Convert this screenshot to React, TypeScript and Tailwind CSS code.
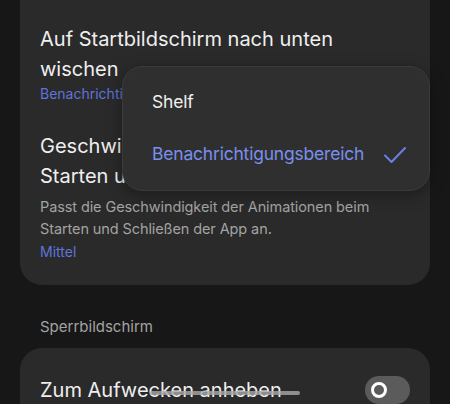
import React from "react";

function Toggle() {
  return (
    <div className="w-[45px] h-[28px] rounded-full bg-[#5b5b5b] flex items-center pl-[6px]">
      <div className="w-[16px] h-[16px] rounded-full border-[3px] border-white bg-[#5b5b5b]" />
    </div>
  );
}

export default function App() {
  return (
    <div
      className="relative w-[450px] h-[404px] overflow-hidden bg-[#171717] px-5"
      style={{ fontFamily: "Inter, Roboto, sans-serif" }}
    >
      {/* Home screen card */}
      <div className="-mt-[20px] bg-[#2a2a2a] rounded-[22px] px-5 pt-[44px] pb-[23px]">
        <div className="text-[20px] leading-[30px] text-[#efefef]">
          Auf Startbildschirm nach unten wischen
        </div>
        <div className="text-[14px] leading-[20px] text-[#5f74dc]">Benachrichtigungsbereich</div>

        <div className="mt-[27px] text-[20px] leading-[30px] text-[#efefef] pr-4">
          Geschwindigkeit der Animation beim Starten und Schließen
        </div>
        <div className="mt-[5px] text-[14.5px] leading-[22px] text-[#a3a3a3] tracking-[-0.1px]">
          Passt die Geschwindigkeit der Animationen beim Starten und Schließen der App an.
        </div>
        <div className="mt-[2px] text-[14px] leading-[20px] text-[#5f74dc]">Mittel</div>
      </div>

      {/* Lock screen section */}
      <div className="mt-[32px] px-5 text-[15px] leading-[20px] text-[#a3a3a3]">Sperrbildschirm</div>
      <div className="mt-[11px] bg-[#2a2a2a] rounded-[22px] px-5 pt-[27px] pb-6">
        <div className="flex items-center justify-between">
          <div className="text-[20px] leading-[30px] text-[#efefef]">Zum Aufwecken anheben</div>
          <Toggle />
        </div>
      </div>

      {/* Dropdown popup */}
      <div className="absolute left-[122px] top-[66px] w-[308px] h-[125px] rounded-[20px] bg-[#2f2f2f] border border-[#3a3a3a] shadow-[0_4px_16px_rgba(0,0,0,0.35)] flex flex-col justify-center pl-[29px] pr-[22px]">
        <div className="h-[52px] flex items-center text-[17.5px] text-[#efefef] tracking-[-0.2px]">Shelf</div>
        <div className="h-[52px] flex items-center justify-between text-[17.5px] text-[#7890ee] tracking-[-0.2px]">
          <span>Benachrichtigungsbereich</span>
          <svg width="24" height="20" viewBox="0 0 24 20" fill="none">
            <path d="M2 10.5 L8.5 17 L22 3" stroke="#6a80e6" strokeWidth="2" strokeLinecap="round" strokeLinejoin="round" />
          </svg>
        </div>
      </div>

      {/* Gesture bar */}
      <div className="absolute left-[150px] top-[391px] w-[150px] h-[4px] rounded-full bg-[#a8a8a8]/80" />
    </div>
  );
}
